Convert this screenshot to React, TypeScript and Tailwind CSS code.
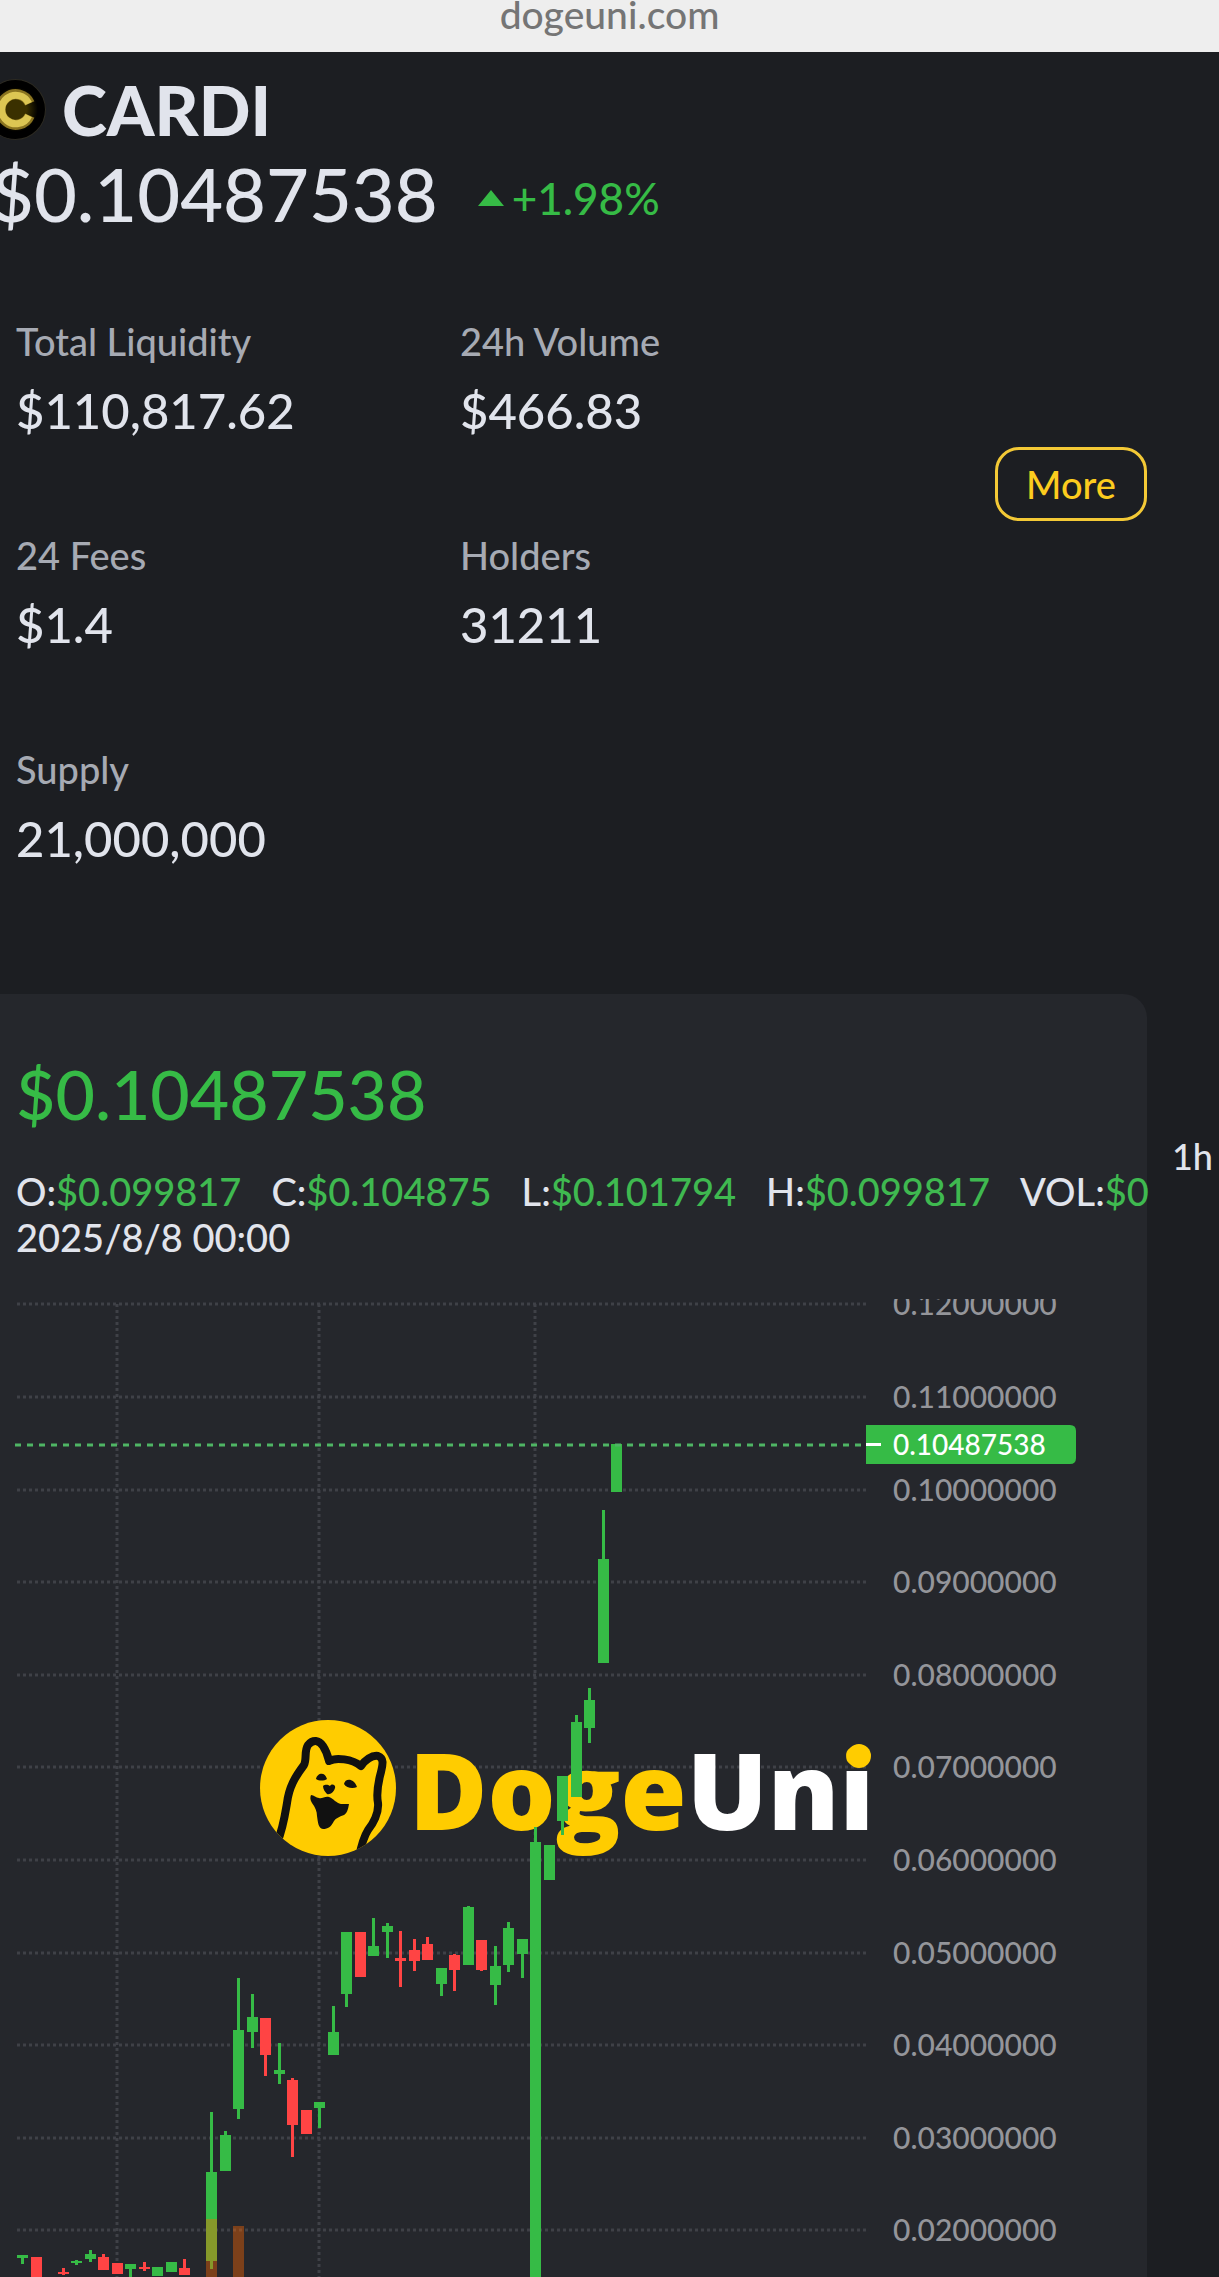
const UP = '#36bb46';
const DOWN = '#ff4444';

const stats = [
  { label: 'Total Liquidity', value: '$110,817.62' },
  { label: '24h Volume', value: '$466.83' },
  { label: '24 Fees', value: '$1.4' },
  { label: 'Holders', value: '31211' },
  { label: 'Supply', value: '21,000,000' },
];

const ohlc = [
  { label: 'O', value: '$0.099817' },
  { label: 'C', value: '$0.104875' },
  { label: 'L', value: '$0.101794' },
  { label: 'H', value: '$0.099817' },
  { label: 'VOL', value: '$0' },
];

// [left, high, body top, body bottom, low, rising]
type Candle = [number, number, number, number, number, boolean];

const candles: Candle[] = [
  [17, 956, 956, 959, 965, true],
  [31, 958, 958, 985, 985, false],
  [58, 969, 973, 975, 976, false],
  [71, 961, 962, 964, 966, true],
  [85, 951, 955, 960, 963, true],
  [98, 955, 958, 971, 971, false],
  [112, 964, 964, 975, 975, false],
  [125, 965, 965, 970, 980, true],
  [139, 963, 968, 970, 972, false],
  [152, 968, 968, 977, 977, true],
  [166, 963, 963, 973, 973, true],
  [179, 960, 969, 976, 976, false],
  [206, 813, 873, 962, 970, true],
  [220, 832, 836, 872, 872, true],
  [233, 679, 731, 810, 820, true],
  [247, 695, 718, 733, 749, true],
  [260, 719, 719, 756, 777, false],
  [274, 744, 771, 775, 785, true],
  [287, 779, 781, 826, 858, false],
  [301, 811, 811, 835, 835, false],
  [314, 803, 803, 809, 829, true],
  [328, 707, 733, 756, 756, true],
  [341, 633, 633, 695, 708, true],
  [355, 633, 633, 678, 678, false],
  [368, 619, 647, 657, 657, true],
  [382, 624, 627, 633, 659, true],
  [395, 632, 659, 662, 688, false],
  [409, 640, 651, 662, 672, false],
  [422, 638, 645, 661, 661, false],
  [436, 669, 669, 685, 697, true],
  [449, 655, 656, 671, 692, false],
  [463, 607, 608, 666, 666, true],
  [476, 641, 641, 671, 672, false],
  [490, 647, 667, 686, 706, true],
  [503, 623, 629, 666, 673, true],
  [517, 640, 640, 655, 679, true],
  [530, 528, 543, 985, 985, true],
  [544, 546, 546, 581, 581, true],
  [557, 477, 477, 522, 536, true],
  [571, 416, 423, 498, 498, true],
  [584, 389, 401, 429, 444, true],
  [598, 211, 260, 364, 364, true],
  [611, 145, 145, 193, 193, true],
];

const ticks = [
  { y: 5, label: '0.12000000' },
  { y: 98, label: '0.11000000' },
  { y: 191, label: '0.10000000' },
  { y: 283, label: '0.09000000' },
  { y: 376, label: '0.08000000' },
  { y: 468, label: '0.07000000' },
  { y: 561, label: '0.06000000' },
  { y: 654, label: '0.05000000' },
  { y: 746, label: '0.04000000' },
  { y: 839, label: '0.03000000' },
  { y: 931, label: '0.02000000' },
];

function Coin() {
  return (
    <svg viewBox="0 0 60 60" className="-ml-[31px] size-[61px] shrink-0" role="img" aria-label="CARDI coin">
      <defs>
        <radialGradient id="gold" cx="0.5" cy="0.5" r="0.5">
          <stop offset="0.5" stopColor="#3a3000" />
          <stop offset="1" stopColor="#000" />
        </radialGradient>
      </defs>
      <circle cx="30" cy="30" r="29.5" fill="#000" stroke="#2c2a22" />
      <circle cx="30" cy="30" r="22" fill="url(#gold)" />
      <path d="M44 24 A15 15 0 1 0 44 36" fill="none" stroke="#8a7420" strokeWidth="10" />
      <path d="M43 24 A14 14 0 1 0 43 36" fill="none" stroke="#dcc653" strokeWidth="7" />
    </svg>
  );
}

function DogeUniLogo() {
  return (
    <g>
      <defs>
        <clipPath id="badge">
          <circle cx="328" cy="489" r="68" />
        </clipPath>
        <linearGradient id="dotted" gradientUnits="userSpaceOnUse" x1="0" y1="440" x2="0" y2="490">
          <stop offset="0.62" stopColor="#ffcc00" />
          <stop offset="0.62" stopColor="#ffffff" />
        </linearGradient>
      </defs>
      <circle cx="328" cy="489" r="68" fill="#ffcc00" />
      <g clipPath="url(#badge)">
        <path
          d="M277 544 C283 530 285 516 287 504 C289 488 295 478 304 466 C307 460 304 452 308 446 C313 440 319 441 323 447 C327 453 328 458 329 462 C336 458 352 460 361 467 C365 461 372 456 378 457 C384 459 383 465 381 473 C378 484 376 494 378 504 C379 514 373 525 368 531 C363 539 361 548 359 558"
          fill="none"
          stroke="#111"
          strokeWidth="8"
          strokeLinejoin="round"
        />
        <path d="M316 480 C317 474 325 472 327 480 C324 482 319 482 316 480Z M344 485 C345 479 354 479 357 488 C353 490 346 489 344 485Z M323 487 C326 485 328 486 330 487 C332 484 336 486 335 489 C334 493 330 496 327 495 C325 493 323 490 323 487Z" fill="#111" />
        <path d="M311 496 C314 496 316 499 319 499 C322 500 325 497 329 498 C334 500 336 504 341 505 L349 505 C348 511 347 514 344 516 C339 518 336 519 334 522 C331 528 328 530 323 530 C318 529 318 523 317 517 C317 512 315 508 312 504 C310 501 310 498 311 496Z" fill="#111" />
      </g>
      <text x="409" y="531" fontSize="107" className="font-['Open_Sans',sans-serif] font-extrabold" fill="#ffcc00">
        Doge
        <tspan fill="#fff">Un</tspan>
        <tspan fill="url(#dotted)">i</tspan>
      </text>
      <circle cx="859" cy="457" r="12" fill="#ffcc00" />
    </g>
  );
}

function Chart() {
  return (
    <svg viewBox="0 0 1147 978" className="mt-[39px] block w-full font-[Lato,sans-serif] font-medium" role="img" aria-label="CARDI price chart">
      <g stroke="#3f4147" strokeWidth="3" strokeDasharray="3 3">
        {ticks.map((t) => (
          <line key={t.label} x1="17" x2="866" y1={t.y} y2={t.y} />
        ))}
        {[117, 319, 535].map((x) => (
          <line key={x} x1={x} x2={x} y1="5" y2="978" />
        ))}
      </g>
      <DogeUniLogo />
      {candles.map(([x, high, top, bottom, low, up]) => (
        <g key={x} fill={up ? UP : DOWN}>
          <rect x={x + 4} y={high} width="3" height={low - high} />
          <rect x={x} y={top} width="11" height={bottom - top} />
        </g>
      ))}
      <rect x="206" y="920" width="11" height="60" fill="#ff6600" fillOpacity="0.4" />
      <rect x="233" y="927" width="11" height="60" fill="#ff6600" fillOpacity="0.4" />
      <line x1="15" x2="866" y1="146" y2="146" stroke="#4fb564" strokeWidth="3" strokeDasharray="6 6" />
      <g fontSize="30" fill="#94959a">
        {ticks.map((t) => (
          <text key={t.label} x="893" y={t.y + 11}>{t.label}</text>
        ))}
      </g>
      <path d="M866 126 H1070 Q1076 126 1076 132 V159 Q1076 165 1070 165 H866Z" fill={UP} />
      <rect x="866" y="144" width="15" height="3" fill="#fff" />
      <text x="893" y="156" fontSize="28" fill="#fff">0.10487538</text>
    </svg>
  );
}

export default function App() {
  return (
    <div className="min-h-screen overflow-hidden bg-[#1c1e22] font-[Lato,sans-serif] font-medium text-[#e1e4ec]">
      <header className="flex h-[52px] justify-center bg-[#eeeeee] text-[39px] leading-[28px] text-[#757575]">
        dogeuni.com
      </header>
      <section className="pt-[27px]">
        <div className="flex items-center gap-4 pl-4">
          <Coin />
          <h1 className="text-[68px] leading-[60px] font-black">CARDI</h1>
        </div>
        <div className="mt-[10px] -ml-[9px] flex items-center gap-10">
          <p className="text-[74px] leading-[88px]">$0.10487538</p>
          <p className="flex items-center gap-2 pt-2 text-[44px] leading-[50px] text-[#36bb46]">
            <svg viewBox="0 0 26 16" className="h-4 w-[26px]" aria-hidden="true">
              <path d="M13 0 L26 16 H0Z" fill={UP} />
            </svg>
            +1.98%
          </p>
        </div>
        <div className="mt-[82px] flex justify-between pr-18 pl-4">
          <dl className="grid grid-cols-[444px_auto] gap-y-24">
            {stats.map((s) => (
              <div key={s.label}>
                <dt className="text-[38px] leading-[42px] text-[#a6aab3]">{s.label}</dt>
                <dd className="mt-[20px] text-[49px] leading-[56px]">{s.value}</dd>
              </div>
            ))}
          </dl>
          <button className="mt-[127px] h-[74px] w-[152px] rounded-3xl border-3 border-[#f3c936] text-[38px] leading-[44px] text-[#fccc1e]">
            More
          </button>
        </div>
      </section>
      <section className="mt-32 flex">
        <div className="min-w-0 flex-1 rounded-tr-3xl bg-[#25272c] pt-[60px]">
          <p className="pl-4 text-[68px] leading-[80px] text-[#36bb46]">$0.10487538</p>
          <div className="mt-[34px] pl-4 text-[38px] leading-[46px]">
            <div className="flex gap-[30px] whitespace-nowrap">
              {ohlc.map((o) => (
                <span key={o.label}>
                  {o.label}:<span className="text-[#3fb950]">{o.value}</span>
                </span>
              ))}
            </div>
            <p>2025/8/8 00:00</p>
          </div>
          <Chart />
        </div>
        <aside className="w-18 pt-[116px]">
          <button className="w-full pt-[23px] pr-[6px] text-right text-[36px] leading-[46px]">1h</button>
        </aside>
      </section>
    </div>
  );
}
